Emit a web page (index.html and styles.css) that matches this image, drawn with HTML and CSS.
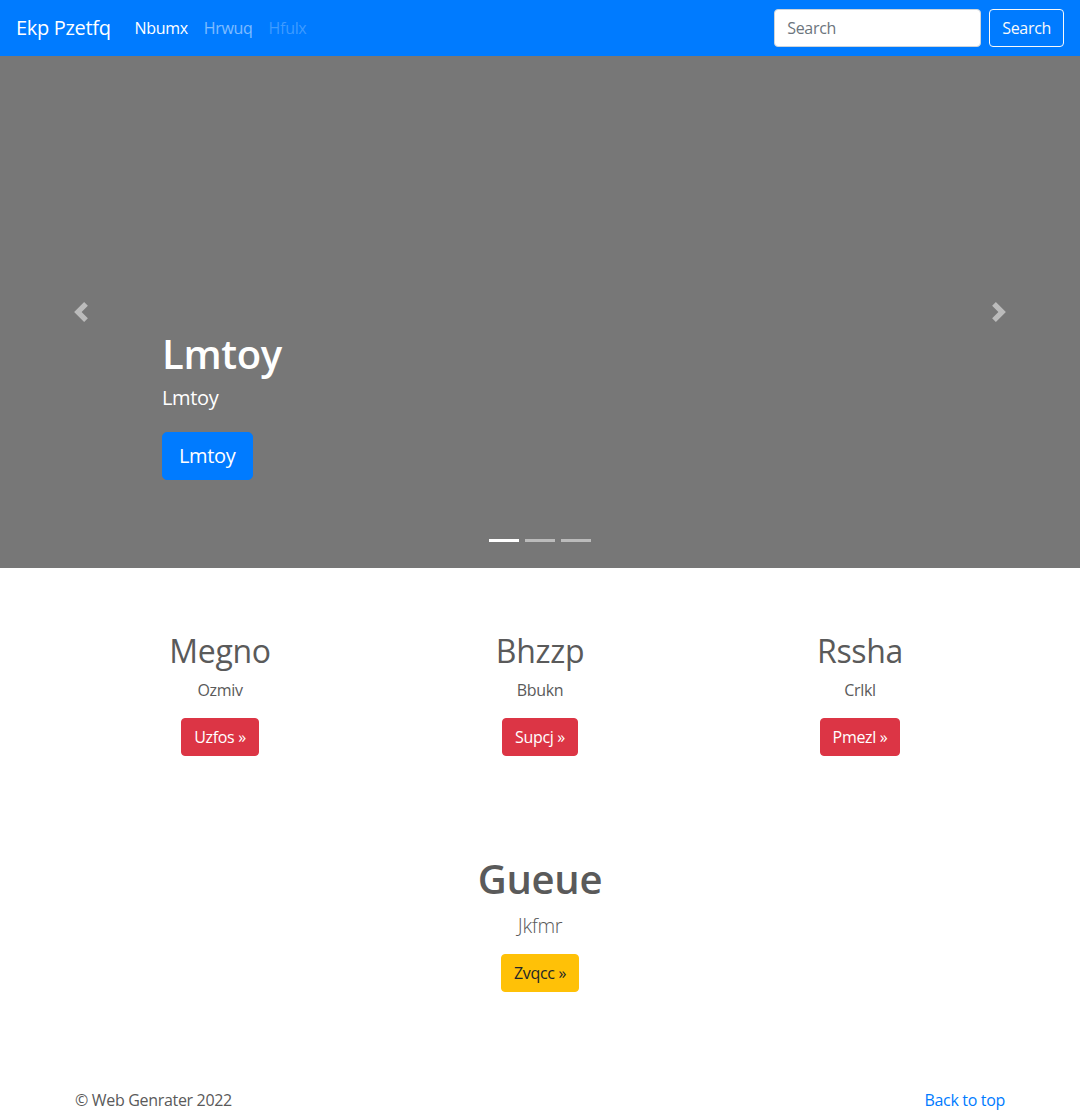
FILE: index.html
```html
<!DOCTYPE html>
<html lang="en">
<head>
<meta charset="utf-8">
<title>Ekp Pzetfq</title>
<link rel="stylesheet" href="styles.css">
</head>
<body>
<header class="navbar">
  <a class="brand" href="#">Ekp Pzetfq</a>
  <ul class="nav">
    <li><a class="nav-link active" href="#">Nbumx</a></li>
    <li><a class="nav-link" href="#">Hrwuq</a></li>
    <li><a class="nav-link disabled" href="#">Hfulx</a></li>
  </ul>
  <form class="search">
    <input class="search-input" type="text" placeholder="Search" aria-label="Search">
    <button class="search-btn" type="button">Search</button>
  </form>
</header>

<main>
  <div class="carousel">
    <div class="caption">
      <h1 class="caption-title">Lmtoy</h1>
      <p class="caption-text">Lmtoy</p>
      <div class="caption-action"><a class="btn btn-lg btn-primary" href="#">Lmtoy</a></div>
    </div>
    <ol class="indicators">
      <li class="active"></li>
      <li></li>
      <li></li>
    </ol>
    <a class="control control-prev" href="#" aria-label="Previous">
      <svg width="20" height="20" viewBox="0 0 8 8"><path fill="#fff" d="M5.25 0l-4 4 4 4 1.5-1.5L4.25 4l2.5-2.5L5.25 0z"/></svg>
    </a>
    <a class="control control-next" href="#" aria-label="Next">
      <svg width="20" height="20" viewBox="0 0 8 8"><path fill="#fff" d="M2.75 0l-1.5 1.5L3.75 4l-2.5 2.5L2.75 8l4-4-4-4z"/></svg>
    </a>
  </div>

  <div class="container">
    <div class="features">
      <div class="feature">
        <h2>Megno</h2>
        <p>Ozmiv</p>
        <a class="btn btn-danger" href="#">Uzfos &raquo;</a>
      </div>
      <div class="feature">
        <h2>Bhzzp</h2>
        <p>Bbukn</p>
        <a class="btn btn-danger" href="#">Supcj &raquo;</a>
      </div>
      <div class="feature">
        <h2>Rssha</h2>
        <p>Crlkl</p>
        <a class="btn btn-danger" href="#">Pmezl &raquo;</a>
      </div>
    </div>

    <div class="highlight">
      <h2 class="highlight-title">Gueue</h2>
      <p class="lead">Jkfmr</p>
      <a class="btn btn-warning" href="#">Zvqcc &raquo;</a>
    </div>
  </div>

  <footer class="container footer">
    <p>&copy; Web Genrater 2022</p>
    <p><a class="link" href="#">Back to top</a></p>
  </footer>
</main>
</body>
</html>
```

FILE: styles.css
```css
* { box-sizing: border-box; }

body {
  margin: 0;
  font-family: "Open Sans", "Noto Sans", "DejaVu Sans", sans-serif;
  font-size: 16px;
  line-height: 24px;
  letter-spacing: -0.02em;
  color: #5a5a5a;
  background: #fff;
}

a { text-decoration: none; }

/* Navbar */
.navbar {
  display: flex;
  align-items: center;
  height: 56px;
  padding: 0 16px;
  background: #007bff;
}
.brand {
  font-size: 20px;
  line-height: 30px;
  color: #fff;
  margin-right: 16px;
}
.nav {
  display: flex;
  flex: 1;
  list-style: none;
  margin: 0;
  padding: 0;
}
.nav-link {
  display: block;
  padding: 8px;
  font-size: 16px;
  line-height: 24px;
  color: rgba(255, 255, 255, 0.5);
}
.nav-link.active { color: #fff; }
.nav-link.disabled { color: rgba(255, 255, 255, 0.25); }

.search {
  display: flex;
  gap: 8px;
  margin: 0;
}
.search-input {
  width: 207px;
  height: 38px;
  padding: 6px 12px;
  font-family: inherit;
  font-size: 16px;
  letter-spacing: inherit;
  color: #495057;
  background: #fff;
  border: 1px solid #ced4da;
  border-radius: 4px;
}
.search-input::placeholder { color: #6c757d; }
.search-btn {
  height: 38px;
  padding: 6px 12px;
  font-family: inherit;
  font-size: 16px;
  line-height: 24px;
  letter-spacing: inherit;
  color: #f8f9fa;
  background: transparent;
  border: 1px solid #f8f9fa;
  border-radius: 4px;
}

/* Carousel */
.carousel {
  position: relative;
  height: 512px;
  background: #777;
  margin-bottom: 64px;
}
.caption {
  position: absolute;
  left: 15%;
  right: 15%;
  bottom: 48px;
  padding: 20px 0;
  color: #fff;
}
.caption-title {
  margin: 0 0 5px;
  font-size: 40px;
  line-height: 48px;
  font-weight: 600;
}
.caption-text {
  margin: 0 0 19px;
  font-size: 20px;
  line-height: 30px;
}
.caption-action { margin-bottom: 20px; }

.indicators {
  position: absolute;
  left: 0;
  right: 0;
  bottom: 26px;
  display: flex;
  justify-content: center;
  gap: 6px;
  list-style: none;
  margin: 0;
  padding: 0;
}
.indicators li {
  width: 30px;
  height: 3px;
  background: #fff;
  opacity: 0.5;
}
.indicators li.active { opacity: 1; }

.control {
  position: absolute;
  top: 0;
  bottom: 0;
  width: 15%;
  display: flex;
  align-items: center;
  justify-content: center;
  opacity: 0.5;
}
.control-prev { left: 0; }
.control-next { right: 0; }
.control svg { display: block; }

/* Buttons */
.btn {
  display: inline-block;
  padding: 6px 12px;
  font-size: 16px;
  line-height: 24px;
  border: 1px solid transparent;
  border-radius: 4px;
}
.btn-lg {
  padding: 8px 16px;
  font-size: 20px;
  line-height: 30px;
  border-radius: 5px;
}
.btn-primary { background: #007bff; border-color: #007bff; color: #fff; }
.btn-danger { background: #dc3545; border-color: #dc3545; color: #fff; }
.btn-warning { background: #ffc107; border-color: #ffc107; color: #212529; }

/* Content */
.container {
  width: 960px;
  margin: 0 auto;
}
.features {
  display: grid;
  grid-template-columns: repeat(3, 1fr);
  text-align: center;
  margin-bottom: 99px;
}
.feature { padding: 0 15px; }
.feature h2 {
  margin: 0 0 8px;
  font-size: 32px;
  line-height: 38px;
  font-weight: 500;
}
.feature p { margin: 0 0 16px; }

.highlight {
  text-align: center;
  margin-bottom: 96px;
}
.highlight-title {
  margin: 0 0 8px;
  font-size: 40px;
  line-height: 48px;
  font-weight: 600;
}
.lead {
  margin: 0 0 13px;
  font-size: 20px;
  line-height: 30px;
  font-weight: 300;
}

.footer {
  display: flex;
  justify-content: space-between;
  padding: 0 15px;
}
.footer p { margin: 0 0 16px; }
.link { color: #007bff; }
```
